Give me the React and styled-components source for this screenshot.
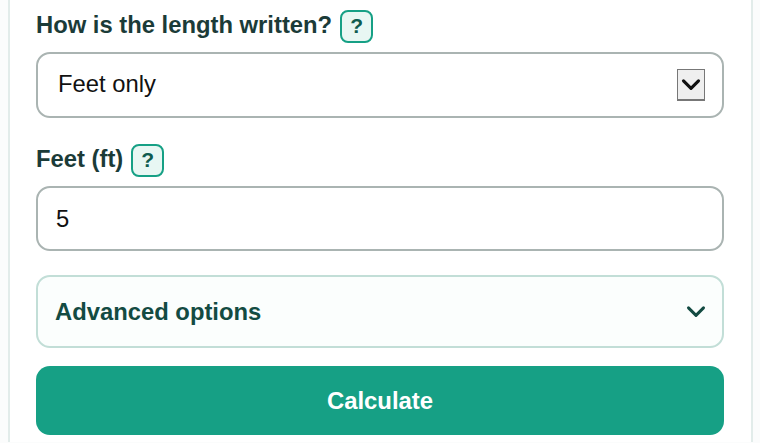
import React from "react";
import styled, { createGlobalStyle } from "styled-components";

const GlobalStyle = createGlobalStyle`
	html, body {
		margin: 0;
		height: 443px;
		overflow: hidden;
		background: #fbfcfc;
		font-family: "Liberation Sans", Arial, sans-serif;
	}
`;

const Card = styled.form`
	box-sizing: border-box;
	width: 745px;
	height: 442px;
	margin-left: 8px;
	padding: 8px 27px 0 26px;
	background: #fff;
	border-left: 2px solid #e2ecea;
	border-right: 2px solid #e2ecea;
	display: flex;
	flex-direction: column;
`;

const Label = styled.label`
	display: flex;
	align-items: center;
	gap: 8px;
	height: 34px;
	font-size: 23.8px;
	font-weight: 700;
	color: #1b3b38;
`;

const Help = styled.span`
	box-sizing: border-box;
	width: 33px;
	height: 33px;
	margin-top: 2px;
	display: flex;
	align-items: center;
	justify-content: center;
	border: 2px solid #16a085;
	border-radius: 8px;
	background: #e8f7f3;
	color: #0f5c50;
	font-size: 21px;
	font-weight: 700;
`;

const Field = styled.div`
	position: relative;
	margin-top: 10px;
	margin-bottom: 24px;
`;

const Select = styled.select`
	box-sizing: border-box;
	display: block;
	width: 100%;
	height: 66px;
	padding: 0 20px 3px;
	border: 2px solid #aab4b2;
	border-radius: 14px;
	background: #fff;
	appearance: none;
	font: 400 23.8px "Liberation Sans", Arial, sans-serif;
	color: #111;
`;

const SelectArrow = styled.span`
	position: absolute;
	top: 17px;
	right: 19px;
	box-sizing: border-box;
	width: 28px;
	height: 32px;
	display: flex;
	align-items: center;
	justify-content: center;
	border: 1px solid #777;
	border-bottom-width: 2px;
	background: #efefef;
	pointer-events: none;
`;

const Input = styled.input`
	box-sizing: border-box;
	display: block;
	width: 100%;
	height: 65px;
	padding: 0 18px;
	border: 2px solid #aab4b2;
	border-radius: 14px;
	background: #fff;
	font: 400 23.8px "Liberation Sans", Arial, sans-serif;
	color: #111;
`;

const Advanced = styled.div`
	box-sizing: border-box;
	height: 73px;
	padding: 0 16px 0 17px;
	display: flex;
	align-items: center;
	justify-content: space-between;
	border: 2px solid #c2ded7;
	border-radius: 14px;
	background: #fbfefd;
	font-size: 23.8px;
	font-weight: 700;
	color: #134b42;
`;

const Submit = styled.button`
	height: 69px;
	margin-top: 18px;
	border: none;
	border-radius: 14px;
	background: #16a085;
	color: #fff;
	font: 700 23.9px "Liberation Sans", Arial, sans-serif;
`;

function Chevron({ size, stroke, width }) {
	return (
		<svg width={size} height={size} viewBox="0 0 24 24" fill="none">
			<path
				d="M3 7l9 9 9-9"
				stroke={stroke}
				strokeWidth={width}
				strokeLinecap="round"
				strokeLinejoin="round"
			/>
		</svg>
	);
}

export default function App() {
	return (
		<>
			<GlobalStyle />
			<Card>
				<Label>
					How is the length written? <Help>?</Help>
				</Label>
				<Field>
					<Select defaultValue="feet">
						<option value="feet">Feet only</option>
						<option value="feet-inches">Feet and inches</option>
					</Select>
					<SelectArrow>
						<Chevron size={20} stroke="#111" width={3.8} />
					</SelectArrow>
				</Field>
				<Label>
					Feet (ft) <Help>?</Help>
				</Label>
				<Field>
					<Input type="text" defaultValue="5" />
				</Field>
				<Advanced>
					Advanced options
					<Chevron size={20} stroke="#134b42" width={3.6} />
				</Advanced>
				<Submit type="button">Calculate</Submit>
			</Card>
		</>
	);
}
